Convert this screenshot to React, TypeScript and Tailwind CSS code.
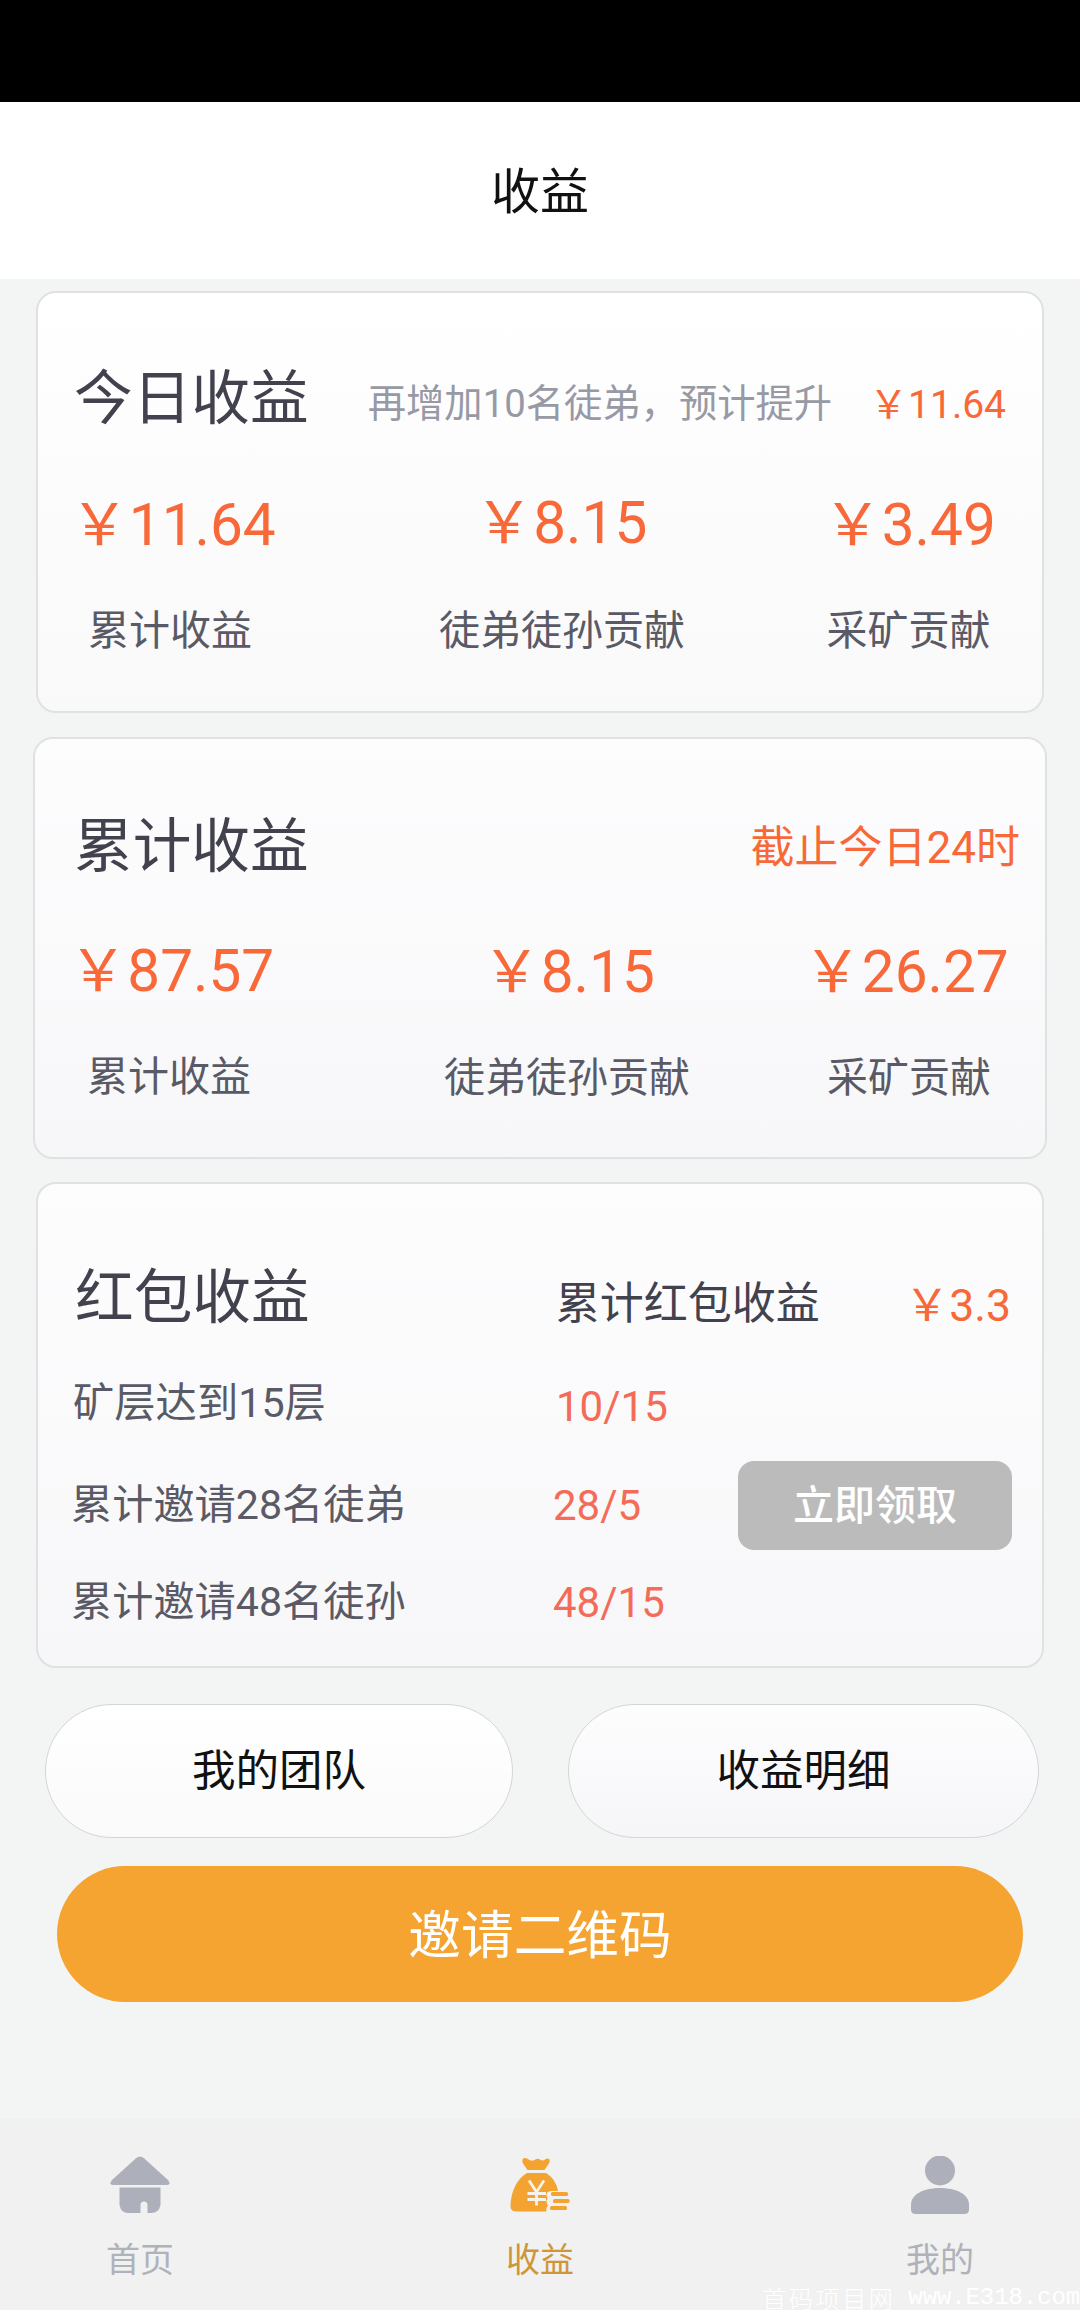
import React from "react";

type Stat = { value: string; label: string; box: string; valueClass: string; labelClass: string };

function StatRow({ stats }: { stats: Stat[] }) {
  return (
    <div className="flex">
      {stats.map((s) => (
        <div key={s.label} className={`flex shrink-0 flex-col items-center ${s.box}`}>
          <div className={`text-[58.500px] text-[#f86838] ${s.valueClass}`}>{s.value}</div>
          <div className={`mt-[56px] text-[41px] text-[#5a5a66] ${s.labelClass}`}>{s.label}</div>
        </div>
      ))}
    </div>
  );
}

const todayStats: Stat[] = [
  { value: "￥11.64", label: "累计收益", box: "ml-[40px] w-[200px]", valueClass: "-ml-[10px]", labelClass: "mr-[16px]" },
  { value: "￥8.15", label: "徒弟徒孙贡献", box: "ml-[150px] w-[270px]", valueClass: "-mt-[2px] mb-[2px] mr-[4px]", labelClass: "mr-[2px]" },
  { value: "￥3.49", label: "采矿贡献", box: "ml-[110px] w-[200px]", valueClass: "ml-[3px]", labelClass: "ml-px" },
];

const totalStats: Stat[] = [
  { value: "￥87.57", label: "累计收益", box: "ml-[41px] w-[200px]", valueClass: "mr-[9px]", labelClass: "mr-[14px]" },
  { value: "￥8.15", label: "徒弟徒孙贡献", box: "ml-[157px] w-[270px]", valueClass: "mt-px ml-px", labelClass: "mr-[2px]" },
  { value: "￥26.27", label: "采矿贡献", box: "ml-[106px] w-[200px]", valueClass: "mt-px mr-[6px]", labelClass: "" },
];

function HomeIcon() {
  return (
    <svg width="60" height="60" viewBox="0 0 60 60" fill="#adb0bb">
      <path d="M26 2.200Q30-1 34 2.200L58 24Q61.500 28.500 57 29H3Q-1.500 28.500 2 24Z" />
      <path d="M9.500 31.500H50.500V49Q49 57 41 57H37.500V49Q37.500 45.500 34 45.500T30.500 49V57H18Q11 57 9.500 49Z" />
    </svg>
  );
}

function MoneyBagIcon() {
  return (
    <svg width="60" height="60" viewBox="0 0 60 60">
      <g fill="#f5a330">
        <path d="M12.500 4C13 1 17 2 19.500 4Q22.500 5.500 25.500 3.500Q28 2 30.500 4Q33 5 35 3.500C38 1.500 40.500 3 39.500 6.500L34.500 14H17.500L13 7.500Q12 5.500 12.500 4Z" />
        <path d="M17 17H36C44 22 47 29 48 35H41Q36 35.500 36.500 40Q38.500 42 36.500 44.500Q36.500 48 38 50Q35.500 52 36.500 55.500H6Q0 55.500 .5 49C1 36 6.500 23 17 17Z" />
        <rect x="41" y="36" width="17" height="4" rx="1.500" />
        <rect x="43" y="43" width="16.500" height="4" rx="1.500" />
        <rect x="40" y="50" width="17" height="4" rx="1.500" />
      </g>
      <path d="M19 24.500L26.500 36L34 24.500M17.500 37.500H36M17.500 43.500H36M26.500 36V49.500" fill="none" stroke="#f6f3ee" strokeWidth="2.800" />
    </svg>
  );
}

function UserIcon() {
  return (
    <svg width="60" height="60" viewBox="0 0 60 60" fill="#adb0bb">
      <circle cx="30" cy="14.500" r="15" />
      <path d="M1 49C1 38 14 32 30 32S59 38 59 49V53.500Q59 58 54 58H6Q1 58 1 53.500Z" />
    </svg>
  );
}

function NavItem({ icon, label, className }: { icon: React.ReactNode; label: string; className: string }) {
  return (
    <div className={`flex w-[120px] flex-col items-center ${className}`}>
      {icon}
      <div className="mt-[27px] text-[34px]">{label}</div>
    </div>
  );
}

const card = "rounded-[20px] border-2 border-[#e0e1e3] bg-linear-to-b";

export default function App() {
  return (
    <div className="flex h-[2310px] w-[1080px] flex-col overflow-hidden bg-[#f3f5f5] font-['Roboto','Noto_Sans_CJK_SC',sans-serif] leading-none whitespace-nowrap">
      <div className="h-[102px] shrink-0 bg-black" />
      <header className="flex h-[177px] shrink-0 items-center justify-center bg-white pt-[4px] text-[49px] text-[#111]">收益</header>

      <section className={`mx-[36px] mt-[12px] h-[422px] shrink-0 from-white to-[#f9f9fa] ${card}`}>
        <div className="mt-[76px] flex h-[60px] items-center pl-[36px]">
          <h2 className="text-[58.700px] text-[#42424e]">今日收益</h2>
          <span className="mt-[10px] ml-[59px] text-[38.300px] text-[#9799a5]">再增加10名徒弟，预计提升</span>
          <span className="mt-[12px] ml-[37px] text-[39px] text-[#f86838]">￥11.64</span>
        </div>
        <div className="mt-[67px]">
          <StatRow stats={todayStats} />
        </div>
      </section>

      <section className={`mx-[33px] mt-[24px] h-[422px] shrink-0 from-[#fdfdfe] to-[#f7f7f9] ${card}`}>
        <div className="mt-[78px] flex h-[60px] items-center justify-between pr-[25px] pl-[39px]">
          <h2 className="text-[58.700px] text-[#42424e]">累计收益</h2>
          <span className="mt-[2px] text-[44px] text-[#f86838]">截止今日24时</span>
        </div>
        <div className="mt-[65px]">
          <StatRow stats={totalStats} />
        </div>
      </section>

      <section className={`mx-[36px] mt-[23px] h-[486px] shrink-0 from-[#fdfdfe] to-[#f7f7f9] ${card}`}>
        <div className="mt-[84px] flex h-[60px] items-center pl-[37px]">
          <h2 className="text-[58.700px] text-[#42424e]">红包收益</h2>
          <span className="mt-[12px] ml-[246px] text-[44px] text-[#42424e]">累计红包收益</span>
          <span className="mt-[16px] ml-[85px] text-[44.500px] text-[#f86838]">￥3.3</span>
        </div>
        <div className="mt-[46px] flex h-[60px] items-center pl-[35px] text-[41.300px] text-[#5a5a66]">
          <span className="w-[483px]">矿层达到15层</span>
          <span className="mt-[6px] text-[42px] text-[#f46c58]">10/15</span>
        </div>
        <div className="mt-[27px] flex h-[89px] items-center pl-[33px] text-[41.200px] text-[#5a5a66]">
          <span className="w-[482px]">累计邀请28名徒弟</span>
          <span className="w-[185px] text-[42px] text-[#f46c58]">28/5</span>
          <button className="h-[89px] w-[274px] rounded-[16px] bg-[#bbb] pt-[2px] text-[41px] font-medium text-white">立即领取</button>
        </div>
        <div className="mt-[23px] flex h-[60px] items-center pl-[33px] text-[41.200px] text-[#5a5a66]">
          <span className="w-[482px]">累计邀请48名徒孙</span>
          <span className="text-[42px] text-[#f46c58]">48/15</span>
        </div>
      </section>

      <div className="mt-[36px] flex h-[134px] shrink-0 justify-between pr-[41px] pl-[45px] text-[43.500px] text-[#111]">
        <button className="w-[468px] rounded-full border-[1.500px] border-[#d4d5d7] bg-linear-to-b from-white to-[#fafafa] pt-[2px]">我的团队</button>
        <button className="w-[471px] rounded-full border-[1.500px] border-[#d4d5d7] bg-linear-to-b from-[#fdfdfe] to-[#f6f6f9] pt-[2px]">收益明细</button>
      </div>
      <button className="mx-[57px] mt-[28px] h-[136px] shrink-0 rounded-full bg-[#f5a331] pt-[5px] text-[52.700px] text-white">邀请二维码</button>

      <nav className="relative mt-[117px] flex flex-1 justify-between bg-[#f1f1f1] px-[80px] pt-[37px] text-[#b0b2ba]">
        <NavItem icon={<HomeIcon />} label="首页" className="" />
        <NavItem icon={<MoneyBagIcon />} label="收益" className="text-[#cf9639]" />
        <NavItem icon={<UserIcon />} label="我的" className="" />
        <div className="absolute right-0 bottom-0 flex text-[24px] text-white">
          <span className="mr-[13px] font-['Noto_Sans_CJK_SC',sans-serif] font-light tracking-[2.600px]">首码项目网</span>
          <span className="font-['Liberation_Mono',monospace] tracking-[-0.100px]">www.E318.com</span>
        </div>
      </nav>
    </div>
  );
}
